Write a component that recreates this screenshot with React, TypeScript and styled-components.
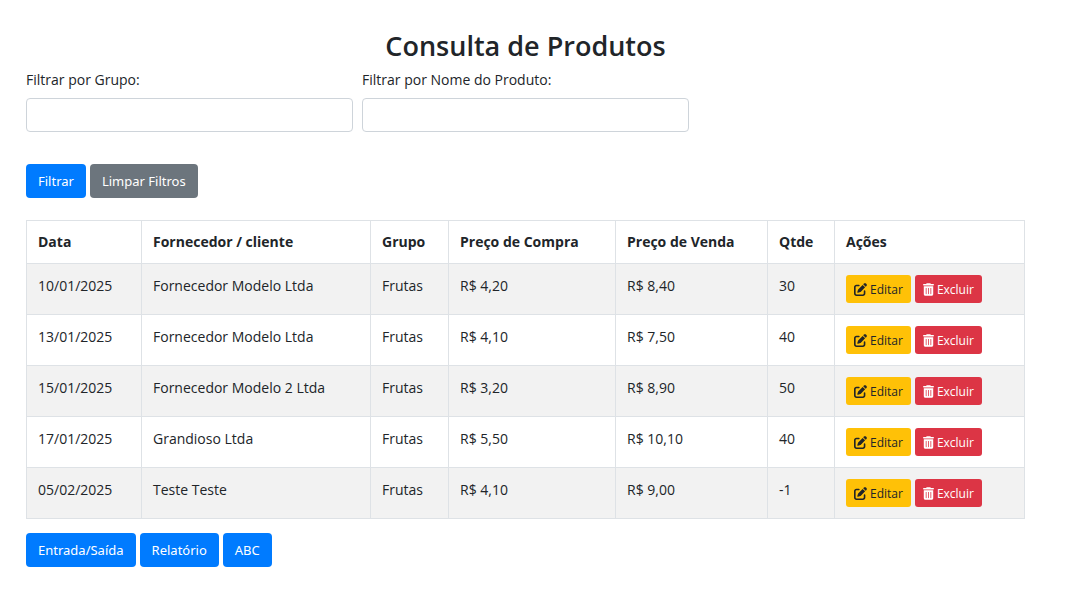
import React from 'react';
import styled, { createGlobalStyle } from 'styled-components';
import { FaPenToSquare, FaTrashCan } from 'react-icons/fa6';

const GlobalStyle = createGlobalStyle`
  *, *::before, *::after { box-sizing: border-box; }
  body {
    margin: 0;
    background: #fff;
    color: #212529;
    font-family: "Segoe UI", "Open Sans", "Noto Sans", sans-serif;
    font-size: 14px;
    line-height: 22px;
  }
`;

const Page = styled.main`
  padding: 29px 51px 40px 26px;
`;

const Title = styled.h2`
  margin: 0 0 6px;
  font-size: 27px;
  font-weight: 600;
  line-height: 34px;
  text-align: center;
`;

const Filters = styled.div`
  display: grid;
  grid-template-columns: repeat(3, 1fr);
  gap: 9px;
`;

const Field = styled.div`
  display: flex;
  flex-direction: column;
  gap: 7px;
`;

const TextInput = styled.input`
  width: 100%;
  height: 34px;
  padding: 5px 11px;
  border: 1px solid #ced4da;
  border-radius: 4px;
  font: inherit;
  color: #495057;
`;

const Actions = styled.div<{ $top: number }>`
  display: flex;
  gap: 4px;
  margin-top: ${({ $top }) => $top}px;
`;

const tones = {
  primary: { bg: '#007bff', fg: '#fff' },
  secondary: { bg: '#6c757d', fg: '#fff' },
  warning: { bg: '#ffc107', fg: '#212529' },
  danger: { bg: '#dc3545', fg: '#fff' },
};

const Button = styled.button<{ $tone: keyof typeof tones }>`
  height: 34px;
  padding: 0 12px;
  border: 0;
  border-radius: 4px;
  background: ${({ $tone }) => tones[$tone].bg};
  color: ${({ $tone }) => tones[$tone].fg};
  font-family: "Segoe UI", "Noto Sans", sans-serif;
  font-size: 13px;
  cursor: pointer;
`;

const SmallButton = styled(Button)`
  display: inline-flex;
  align-items: center;
  gap: 3px;
  height: 28px;
  padding: 0 8px;
  border-radius: 3px;
  font-family: inherit;
  font-size: 12px;
`;

const EditIcon = styled(FaPenToSquare)`
  width: 13px;
  height: 13px;
`;

const TrashIcon = styled(FaTrashCan)`
  width: 11px;
  height: 13px;
`;

const Table = styled.table`
  width: 100%;
  margin-top: 22px;
  border-collapse: collapse;
  table-layout: fixed;
`;

const Col = styled.col<{ $width?: number }>`
  width: ${({ $width }) => ($width ? `${$width}px` : 'auto')};
`;

const HeadCell = styled.th`
  padding: 10px 11px;
  border: 1px solid #dee2e6;
  text-align: left;
  font-weight: 700;
`;

const Row = styled.tr`
  &:nth-of-type(odd) { background: #f2f2f2; }
`;

const Cell = styled.td`
  padding: 11px;
  border: 1px solid #dee2e6;
  vertical-align: top;
`;

const RowActions = styled.div`
  display: flex;
  gap: 4px;
`;

const columns = [
  { label: 'Data', width: 115 },
  { label: 'Fornecedor / cliente', width: 229 },
  { label: 'Grupo', width: 78 },
  { label: 'Preço de Compra', width: 167 },
  { label: 'Preço de Venda', width: 152 },
  { label: 'Qtde', width: 67 },
  { label: 'Ações' },
];

const rows = [
  ['10/01/2025', 'Fornecedor Modelo Ltda', 'Frutas', 'R$ 4,20', 'R$ 8,40', '30'],
  ['13/01/2025', 'Fornecedor Modelo Ltda', 'Frutas', 'R$ 4,10', 'R$ 7,50', '40'],
  ['15/01/2025', 'Fornecedor Modelo 2 Ltda', 'Frutas', 'R$ 3,20', 'R$ 8,90', '50'],
  ['17/01/2025', 'Grandioso Ltda', 'Frutas', 'R$ 5,50', 'R$ 10,10', '40'],
  ['05/02/2025', 'Teste Teste', 'Frutas', 'R$ 4,10', 'R$ 9,00', '-1'],
];

export default function App() {
  return (
    <>
      <GlobalStyle />
      <Page>
        <Title>Consulta de Produtos</Title>
        <form onSubmit={(e) => e.preventDefault()}>
          <Filters>
            <Field>
              <label htmlFor="grupo">Filtrar por Grupo:</label>
              <TextInput id="grupo" type="text" />
            </Field>
            <Field>
              <label htmlFor="produto">Filtrar por Nome do Produto:</label>
              <TextInput id="produto" type="text" />
            </Field>
          </Filters>
          <Actions $top={32}>
            <Button $tone="primary" type="submit">Filtrar</Button>
            <Button $tone="secondary" type="reset">Limpar Filtros</Button>
          </Actions>
        </form>
        <Table>
          <colgroup>
            {columns.map((c) => <Col key={c.label} $width={c.width} />)}
          </colgroup>
          <thead>
            <tr>{columns.map((c) => <HeadCell key={c.label} scope="col">{c.label}</HeadCell>)}</tr>
          </thead>
          <tbody>
            {rows.map((r) => (
              <Row key={r[0]}>
                {r.map((v, i) => <Cell key={i}>{v}</Cell>)}
                <Cell>
                  <RowActions>
                    <SmallButton $tone="warning" type="button"><EditIcon />Editar</SmallButton>
                    <SmallButton $tone="danger" type="button"><TrashIcon />Excluir</SmallButton>
                  </RowActions>
                </Cell>
              </Row>
            ))}
          </tbody>
        </Table>
        <Actions $top={14}>
          <Button $tone="primary" type="button">Entrada/Saída</Button>
          <Button $tone="primary" type="button">Relatório</Button>
          <Button $tone="primary" type="button">ABC</Button>
        </Actions>
      </Page>
    </>
  );
}
